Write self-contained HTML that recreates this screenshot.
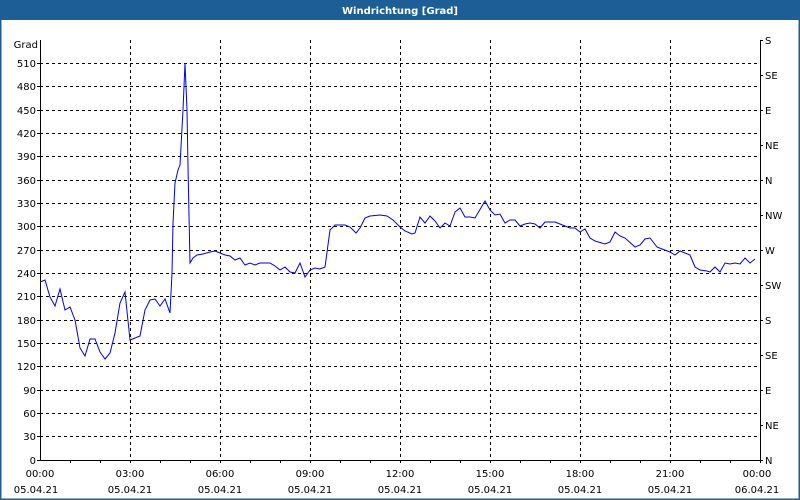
<!DOCTYPE html>
<html><head><meta charset="utf-8"><style>
html,body{margin:0;padding:0;background:#fff}
svg{display:block}
text{font-family:"DejaVu Sans","Liberation Sans",sans-serif;font-size:10px;fill:#000}
</style></head><body>
<svg width="800" height="500" viewBox="0 0 800 500" xmlns="http://www.w3.org/2000/svg">
<rect x="0" y="0" width="800" height="500" fill="#fff"/>
<rect x="0" y="0" width="800" height="20" fill="#1d5e96"/>
<rect x="0.5" y="0.5" width="799" height="499" fill="none" stroke="#1d5e96" stroke-width="2"/>
<text x="400" y="14" text-anchor="middle" style="fill:#fff;font-weight:bold;font-size:10px">Windrichtung [Grad]</text>
<g stroke="#000" stroke-width="1" stroke-dasharray="3,3" fill="none" shape-rendering="crispEdges">
<path d="M130.5 40V460M220.5 40V460M310.5 40V460M400.5 40V460M490.5 40V460M580.5 40V460M670.5 40V460"/>
<path d="M40 63.5H760M40 86.5H760M40 110.5H760M40 133.5H760M40 156.5H760M40 180.5H760M40 203.5H760M40 226.5H760M40 250.5H760M40 273.5H760M40 296.5H760M40 320.5H760M40 343.5H760M40 366.5H760M40 390.5H760M40 413.5H760M40 436.5H760"/>
</g>
<g stroke="#000" stroke-width="1" fill="none" shape-rendering="crispEdges">
<path d="M40.5 40V460.5H760.5V40"/>
<path d="M130.5 460v3M220.5 460v3M310.5 460v3M400.5 460v3M490.5 460v3M580.5 460v3M670.5 460v3M760.5 460v3M70.5 460v3M100.5 460v3M160.5 460v3M190.5 460v3M250.5 460v3M280.5 460v3M340.5 460v3M370.5 460v3M430.5 460v3M460.5 460v3M520.5 460v3M550.5 460v3M610.5 460v3M640.5 460v3M700.5 460v3M730.5 460v3"/>
<path d="M37 460.5h3M37 436.5h3M37 413.5h3M37 390.5h3M37 366.5h3M37 343.5h3M37 320.5h3M37 296.5h3M37 273.5h3M37 250.5h3M37 226.5h3M37 203.5h3M37 180.5h3M37 156.5h3M37 133.5h3M37 110.5h3M37 86.5h3M37 63.5h3"/>
<path d="M760 40.5h3M760 75.5h3M760 110.5h3M760 145.5h3M760 180.5h3M760 215.5h3M760 250.5h3M760 285.5h3M760 320.5h3M760 355.5h3M760 390.5h3M760 425.5h3M760 460.5h3"/>
</g>
<polyline fill="none" stroke="#0000ee" stroke-width="1" points="40,282 45,280 50,297 55,306 60,289 65,310 70,307 75,320 80,348 85,356 90,339 95,339 100,352 105,359 110,353 115,333 120,303 125,292 130,340 135,338 140,336 145,310 150,300 155,299 160,306 165,299 170,313 172,273 173,223 175,183 178,170 180,165 183,110 185,63 187,110 188,167 190,263 193,258 197,255 203,254 210,252 215,251 220,253 225,255 230,256 235,260 240,258 245,265 250,263 255,265 260,263 270,263 275,266 280,270 285,267 290,272 295,273 300,263 305,277 310,270 315,268 320,269 325,267 330,230 335,225 345,225 350,227 356,233 360,228 365,218 370,216 380,215 387,216 393,220 400,227 405,231 412,234 415,233 420,217 425,223 430,216 435,221 440,228 445,223 450,226 455,212 460,208 465,217 470,217 475,218 485,201 490,210 495,215 500,214 505,223 510,220 515,220 520,226 525,224 530,223 535,224 540,228 545,222 555,222 560,224 565,226 570,228 575,228 580,232 585,229 590,238 595,241 605,244 610,242 615,232 620,236 625,238 635,247 640,245 645,239 650,238 657,247 662,249 670,252 675,255 680,251 690,255 695,267 700,270 707,271 710,272 715,267 720,272 725,263 730,264 735,263 740,264 745,258 750,263 755,259"/>
<g text-anchor="end">
<text x="38" y="48">Grad</text>
<text x="36" y="67">510</text><text x="36" y="90">480</text><text x="36" y="114">450</text><text x="36" y="137">420</text><text x="36" y="160">390</text><text x="36" y="184">360</text><text x="36" y="207">330</text><text x="36" y="230">300</text><text x="36" y="254">270</text><text x="36" y="277">240</text><text x="36" y="300">210</text><text x="36" y="324">180</text><text x="36" y="347">150</text><text x="36" y="370">120</text><text x="36" y="394">90</text><text x="36" y="417">60</text><text x="36" y="440">30</text><text x="36" y="464">0</text>
</g>
<g>
<text x="765" y="44">S</text><text x="765" y="79">SE</text><text x="765" y="114">E</text><text x="765" y="149">NE</text><text x="765" y="184">N</text><text x="765" y="219">NW</text><text x="765" y="254">W</text><text x="765" y="289">SW</text><text x="765" y="324">S</text><text x="765" y="359">SE</text><text x="765" y="394">E</text><text x="765" y="429">NE</text><text x="765" y="464">N</text>
</g>
<g text-anchor="middle">
<text x="40" y="477">00:00</text><text x="130" y="477">03:00</text><text x="220" y="477">06:00</text><text x="310" y="477">09:00</text><text x="400" y="477">12:00</text><text x="490" y="477">15:00</text><text x="580" y="477">18:00</text><text x="670" y="477">21:00</text><text x="757" y="477">00:00</text>
<text x="36" y="493">05.04.21</text><text x="130" y="493">05.04.21</text><text x="220" y="493">05.04.21</text><text x="310" y="493">05.04.21</text><text x="400" y="493">05.04.21</text><text x="490" y="493">05.04.21</text><text x="580" y="493">05.04.21</text><text x="670" y="493">05.04.21</text><text x="757" y="493">06.04.21</text>
</g>
</svg>
</body></html>
